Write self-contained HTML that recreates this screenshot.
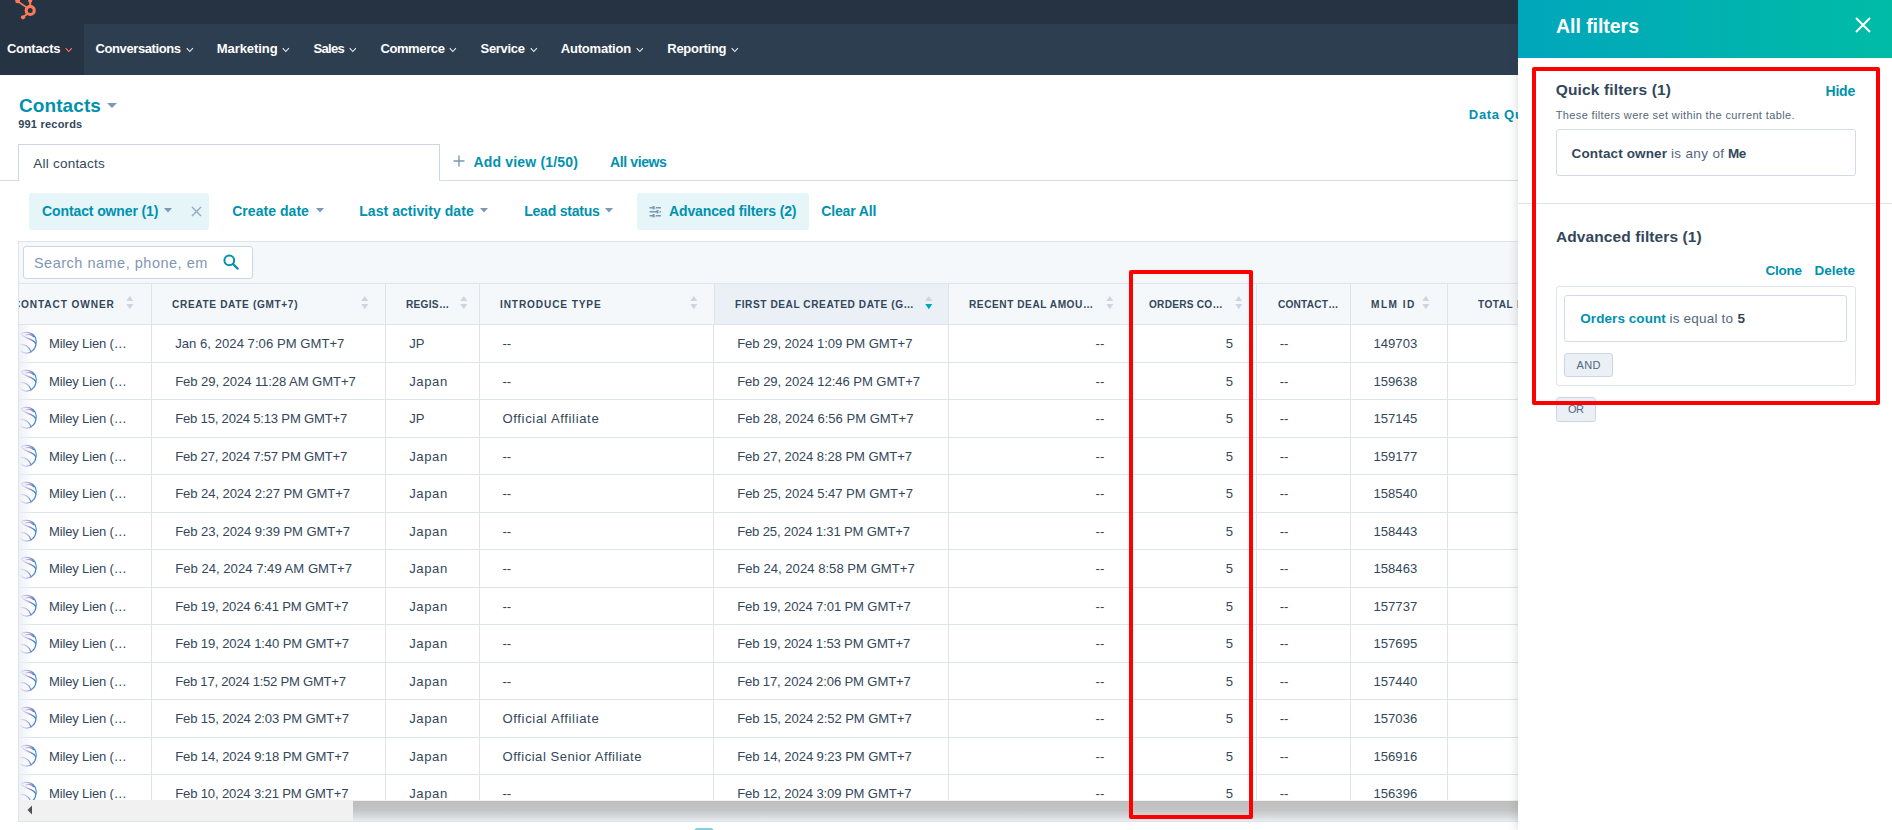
<!DOCTYPE html>
<html><head><meta charset="utf-8"><style>
html,body{margin:0;padding:0;width:1892px;height:830px;overflow:hidden;background:#fff;font-family:"Liberation Sans",sans-serif;}
.a{position:absolute;}
.t{position:absolute;white-space:nowrap;line-height:1;}
</style></head><body>
<div class="a" style="left:0px;top:0px;width:1892px;height:24px;background:#253342"></div>
<div class="a" style="left:0px;top:24px;width:1892px;height:51px;background:#2d3e50"></div>
<div class="a" style="left:0px;top:24px;width:84px;height:51px;background:#253342"></div>
<svg class="a" style="left:14px;top:0px" width="24" height="22" viewBox="0 0 24 22">
<g fill="none" stroke="#ff7a59" stroke-linecap="round">
<circle cx="16.2" cy="10.4" r="4.05" stroke-width="3.1"/>
<line x1="3.5" y1="1.2" x2="13" y2="7.6" stroke-width="1.7"/>
<line x1="16.2" y1="1" x2="16.2" y2="6.5" stroke-width="2"/>
<line x1="9" y1="17.4" x2="13.5" y2="13.5" stroke-width="1.9"/>
</g>
<g fill="#ff7a59"><circle cx="3.6" cy="0.9" r="2.4"/><circle cx="9" cy="17.3" r="2.1"/><rect x="14.1" y="-1" width="4.2" height="3.4" rx="1.8"/></g>
</svg>
<div class="t" style="left:7.00px;top:42.29px;font-size:13px;color:#ffffff;font-weight:bold;letter-spacing:-0.303px;">Contacts</div>
<svg class="a" style="left:65.0px;top:47px" width="8" height="6" viewBox="0 0 8 6"><path d="M0.7 1.1 L3.8 4.5 L6.9 1.1" fill="none" stroke="#ff7a59" stroke-width="1.05"/></svg>
<div class="t" style="left:95.50px;top:42.29px;font-size:13px;color:#ffffff;font-weight:bold;letter-spacing:-0.400px;">Conversations</div>
<svg class="a" style="left:185.5px;top:47px" width="8" height="6" viewBox="0 0 8 6"><path d="M0.7 1.1 L3.8 4.5 L6.9 1.1" fill="none" stroke="#eef2f6" stroke-width="1.05"/></svg>
<div class="t" style="left:216.70px;top:42.29px;font-size:13px;color:#ffffff;font-weight:bold;letter-spacing:-0.050px;">Marketing</div>
<svg class="a" style="left:282.2px;top:47px" width="8" height="6" viewBox="0 0 8 6"><path d="M0.7 1.1 L3.8 4.5 L6.9 1.1" fill="none" stroke="#eef2f6" stroke-width="1.05"/></svg>
<div class="t" style="left:313.40px;top:42.29px;font-size:13px;color:#ffffff;font-weight:bold;letter-spacing:-0.643px;">Sales</div>
<svg class="a" style="left:349.3px;top:47px" width="8" height="6" viewBox="0 0 8 6"><path d="M0.7 1.1 L3.8 4.5 L6.9 1.1" fill="none" stroke="#eef2f6" stroke-width="1.05"/></svg>
<div class="t" style="left:380.40px;top:42.29px;font-size:13px;color:#ffffff;font-weight:bold;letter-spacing:-0.385px;">Commerce</div>
<svg class="a" style="left:449.4px;top:47px" width="8" height="6" viewBox="0 0 8 6"><path d="M0.7 1.1 L3.8 4.5 L6.9 1.1" fill="none" stroke="#eef2f6" stroke-width="1.05"/></svg>
<div class="t" style="left:480.50px;top:42.29px;font-size:13px;color:#ffffff;font-weight:bold;letter-spacing:-0.294px;">Service</div>
<svg class="a" style="left:529.5px;top:47px" width="8" height="6" viewBox="0 0 8 6"><path d="M0.7 1.1 L3.8 4.5 L6.9 1.1" fill="none" stroke="#eef2f6" stroke-width="1.05"/></svg>
<div class="t" style="left:560.80px;top:42.29px;font-size:13px;color:#ffffff;font-weight:bold;letter-spacing:-0.212px;">Automation</div>
<svg class="a" style="left:635.6px;top:47px" width="8" height="6" viewBox="0 0 8 6"><path d="M0.7 1.1 L3.8 4.5 L6.9 1.1" fill="none" stroke="#eef2f6" stroke-width="1.05"/></svg>
<div class="t" style="left:667.30px;top:42.29px;font-size:13px;color:#ffffff;font-weight:bold;letter-spacing:-0.273px;">Reporting</div>
<svg class="a" style="left:731.0px;top:47px" width="8" height="6" viewBox="0 0 8 6"><path d="M0.7 1.1 L3.8 4.5 L6.9 1.1" fill="none" stroke="#eef2f6" stroke-width="1.05"/></svg>
<div class="t" style="left:18.90px;top:95.91px;font-size:19px;color:#0091ae;font-weight:bold;letter-spacing:0.102px;">Contacts</div>
<svg class="a" style="left:107px;top:103px" width="10" height="5" viewBox="0 0 10 5"><path d="M0 0 L10 0 L5 5Z" fill="#7c98b6"/></svg>
<div class="t" style="left:18.20px;top:119.29px;font-size:11px;color:#33475b;font-weight:bold;letter-spacing:0.224px;">991 records</div>
<div class="t" style="left:1468.80px;top:108.19px;font-size:13px;color:#0091ae;font-weight:bold;letter-spacing:0.7px;">Data Quality</div>
<div class="a" style="left:0px;top:180px;width:1518px;height:1px;background:#d6dde6"></div>
<div class="a" style="left:18px;top:144px;width:422px;height:37px;background:#fff;border:1px solid #cbd6e2;border-bottom:none;box-sizing:border-box"></div>
<div class="t" style="left:33.30px;top:156.77px;font-size:13.5px;color:#33475b;letter-spacing:0.225px;">All contacts</div>
<svg class="a" style="left:453px;top:155px" width="12" height="12" viewBox="0 0 12 12"><path d="M6 0.5V11.5M0.5 6H11.5" stroke="#7c98b6" stroke-width="1.4"/></svg>
<div class="t" style="left:473.50px;top:155.45px;font-size:14px;color:#0091ae;font-weight:bold;letter-spacing:0.177px;">Add view (1/50)</div>
<div class="t" style="left:610.00px;top:155.45px;font-size:14px;color:#0091ae;font-weight:bold;letter-spacing:-0.377px;">All views</div>
<div class="a" style="left:29px;top:193px;width:180px;height:37px;background:#e5f5f8;border-radius:3px"></div>
<div class="a" style="left:637px;top:193px;width:172px;height:37px;background:#e5f5f8;border-radius:3px"></div>
<div class="t" style="left:42.10px;top:204.45px;font-size:14px;color:#0091ae;font-weight:bold;letter-spacing:-0.120px;">Contact owner (1)</div>
<svg class="a" style="left:164px;top:208px" width="8" height="5" viewBox="0 0 8 5"><path d="M0 0H8L4 4.5Z" fill="#7c98b6"/></svg>
<svg class="a" style="left:191px;top:205.5px" width="11" height="11" viewBox="0 0 11 11"><path d="M1 1L10 10M10 1L1 10" stroke="#94a9bf" stroke-width="1.4"/></svg>
<div class="t" style="left:232.20px;top:204.45px;font-size:14px;color:#0091ae;font-weight:bold;letter-spacing:0.045px;">Create date</div>
<svg class="a" style="left:315.5px;top:208px" width="8" height="5" viewBox="0 0 8 5"><path d="M0 0H8L4 4.5Z" fill="#7c98b6"/></svg>
<div class="t" style="left:359.20px;top:204.45px;font-size:14px;color:#0091ae;font-weight:bold;letter-spacing:0.053px;">Last activity date</div>
<svg class="a" style="left:480px;top:208px" width="8" height="5" viewBox="0 0 8 5"><path d="M0 0H8L4 4.5Z" fill="#7c98b6"/></svg>
<div class="t" style="left:524.20px;top:204.45px;font-size:14px;color:#0091ae;font-weight:bold;letter-spacing:-0.220px;">Lead status</div>
<svg class="a" style="left:605px;top:208px" width="8" height="5" viewBox="0 0 8 5"><path d="M0 0H8L4 4.5Z" fill="#7c98b6"/></svg>
<svg class="a" style="left:649px;top:205px" width="13" height="13" viewBox="0 0 13 13"><g stroke="#7c98b6" stroke-width="1.6"><path d="M0.5 2.7H12M0.5 6.7H12M0.5 10.7H12"/></g><g fill="#7c98b6"><rect x="3.6" y="1" width="2" height="3.4"/><rect x="7.5" y="5" width="2" height="3.4"/><rect x="3.6" y="9" width="2" height="3.4"/></g><g fill="#e5f5f8"><rect x="5.6" y="2" width="1.2" height="1.4"/><rect x="9.5" y="6" width="1.2" height="1.4"/><rect x="5.6" y="10" width="1.2" height="1.4"/></g></svg>
<div class="t" style="left:669.00px;top:204.45px;font-size:14px;color:#0091ae;font-weight:bold;letter-spacing:-0.128px;">Advanced filters (2)</div>
<div class="t" style="left:821.20px;top:204.45px;font-size:14px;color:#0091ae;font-weight:bold;letter-spacing:-0.148px;">Clear All</div>
<div class="a" style="left:18px;top:241px;width:1500px;height:581px;background:#fff;border:1px solid #dfe3eb;border-right:none;box-sizing:border-box"></div>
<div class="a" style="left:19px;top:242px;width:1499px;height:41px;background:#f5f8fa"></div>
<div class="a" style="left:23px;top:246px;width:230px;height:33px;background:#fff;border:1px solid #cbd6e2;border-radius:3px;box-sizing:border-box"></div>
<div class="t" style="left:33.90px;top:255.72px;font-size:14.5px;color:#7f97b2;letter-spacing:0.504px;">Search name, phone, em</div>
<svg class="a" style="left:223px;top:254px" width="16" height="16" viewBox="0 0 16 16"><circle cx="6.3" cy="6.3" r="4.9" fill="none" stroke="#0091ae" stroke-width="2"/><path d="M10 10L14.6 14.6" stroke="#0091ae" stroke-width="2.2" stroke-linecap="round"/></svg>
<div class="a" style="left:19px;top:283px;width:1499px;height:1px;background:#dfe3eb"></div>
<div class="a" style="left:19px;top:284px;width:1499px;height:40px;background:#f5f8fa"></div>
<div class="a" style="left:714px;top:284px;width:234px;height:40px;background:#eaf0f6"></div>
<div class="a" style="left:19px;top:324px;width:1499px;height:1px;background:#dfe3eb"></div>
<div class="a" style="left:151px;top:284px;width:1px;height:516px;background:#dfe3eb"></div>
<div class="a" style="left:385px;top:284px;width:1px;height:516px;background:#dfe3eb"></div>
<div class="a" style="left:479px;top:284px;width:1px;height:516px;background:#dfe3eb"></div>
<div class="a" style="left:714px;top:284px;width:1px;height:40px;background:#dfe3eb"></div>
<div class="a" style="left:713px;top:325px;width:1px;height:475px;background:#dfe3eb"></div>
<div class="a" style="left:948px;top:284px;width:1px;height:516px;background:#dfe3eb"></div>
<div class="a" style="left:1130px;top:284px;width:1px;height:516px;background:#dfe3eb"></div>
<div class="a" style="left:1256px;top:284px;width:1px;height:516px;background:#dfe3eb"></div>
<div class="a" style="left:1350px;top:284px;width:1px;height:516px;background:#dfe3eb"></div>
<div class="a" style="left:1447px;top:284px;width:1px;height:516px;background:#dfe3eb"></div>
<div class="a" style="left:19px;top:284px;width:132px;height:40px;overflow:hidden">
<div class="t" style="left:1.60px;top:14.56px;font-size:11.5px;color:#33475b;font-weight:bold;letter-spacing:1.022px;transform:scaleX(0.88);transform-origin:0 0;">ONTACT OWNER</div>
<div class="t" style="left:-6.31px;top:14.56px;font-size:11.5px;color:#33475b;font-weight:bold;transform:scaleX(0.88);transform-origin:0 0;">C</div>
</div>
<div class="t" style="left:172.00px;top:298.56px;font-size:11.5px;color:#33475b;font-weight:bold;letter-spacing:0.724px;transform:scaleX(0.88);transform-origin:0 0;">CREATE DATE (GMT+7)</div>
<div class="t" style="left:406.40px;top:298.56px;font-size:11.5px;color:#33475b;font-weight:bold;letter-spacing:0.316px;transform:scaleX(0.88);transform-origin:0 0;">REGIS…</div>
<div class="t" style="left:500.40px;top:298.56px;font-size:11.5px;color:#33475b;font-weight:bold;letter-spacing:0.988px;transform:scaleX(0.88);transform-origin:0 0;">INTRODUCE TYPE</div>
<div class="t" style="left:734.50px;top:298.56px;font-size:11.5px;color:#33475b;font-weight:bold;letter-spacing:0.635px;transform:scaleX(0.88);transform-origin:0 0;">FIRST DEAL CREATED DATE (G…</div>
<div class="t" style="left:969.10px;top:298.56px;font-size:11.5px;color:#33475b;font-weight:bold;letter-spacing:0.621px;transform:scaleX(0.88);transform-origin:0 0;">RECENT DEAL AMOU…</div>
<div class="t" style="left:1149.30px;top:298.56px;font-size:11.5px;color:#33475b;font-weight:bold;letter-spacing:0.277px;transform:scaleX(0.88);transform-origin:0 0;">ORDERS CO…</div>
<div class="t" style="left:1277.50px;top:298.56px;font-size:11.5px;color:#33475b;font-weight:bold;letter-spacing:0.237px;transform:scaleX(0.88);transform-origin:0 0;">CONTACT…</div>
<div class="t" style="left:1371.40px;top:298.56px;font-size:11.5px;color:#33475b;font-weight:bold;letter-spacing:1.665px;transform:scaleX(0.88);transform-origin:0 0;">MLM ID</div>
<div class="t" style="left:1477.50px;top:298.56px;font-size:11.5px;color:#33475b;font-weight:bold;letter-spacing:0.542px;transform:scaleX(0.88);transform-origin:0 0;">TOTAL</div>
<div class="t" style="left:1516.50px;top:298.56px;font-size:11.5px;color:#33475b;font-weight:bold;transform:scaleX(0.88);transform-origin:0 0;">R</div>
<svg class="a" style="left:126.2px;top:296px" width="8" height="14" viewBox="0 0 8 14"><path d="M0.3 5L3.8 0L7.3 5Z" fill="#cbd6e2"/><path d="M0.3 8L3.8 13.2L7.3 8Z" fill="#cbd6e2"/></svg>
<svg class="a" style="left:361.2px;top:296px" width="8" height="14" viewBox="0 0 8 14"><path d="M0.3 5L3.8 0L7.3 5Z" fill="#cbd6e2"/><path d="M0.3 8L3.8 13.2L7.3 8Z" fill="#cbd6e2"/></svg>
<svg class="a" style="left:459.7px;top:296px" width="8" height="14" viewBox="0 0 8 14"><path d="M0.3 5L3.8 0L7.3 5Z" fill="#cbd6e2"/><path d="M0.3 8L3.8 13.2L7.3 8Z" fill="#cbd6e2"/></svg>
<svg class="a" style="left:689.7px;top:296px" width="8" height="14" viewBox="0 0 8 14"><path d="M0.3 5L3.8 0L7.3 5Z" fill="#cbd6e2"/><path d="M0.3 8L3.8 13.2L7.3 8Z" fill="#cbd6e2"/></svg>
<svg class="a" style="left:1105.7px;top:296px" width="8" height="14" viewBox="0 0 8 14"><path d="M0.3 5L3.8 0L7.3 5Z" fill="#cbd6e2"/><path d="M0.3 8L3.8 13.2L7.3 8Z" fill="#cbd6e2"/></svg>
<svg class="a" style="left:1235.2px;top:296px" width="8" height="14" viewBox="0 0 8 14"><path d="M0.3 5L3.8 0L7.3 5Z" fill="#cbd6e2"/><path d="M0.3 8L3.8 13.2L7.3 8Z" fill="#cbd6e2"/></svg>
<svg class="a" style="left:1422.2px;top:296px" width="8" height="14" viewBox="0 0 8 14"><path d="M0.3 5L3.8 0L7.3 5Z" fill="#cbd6e2"/><path d="M0.3 8L3.8 13.2L7.3 8Z" fill="#cbd6e2"/></svg>
<svg class="a" style="left:924.7px;top:296px" width="8" height="14" viewBox="0 0 8 14"><path d="M0.3 5L3.8 0L7.3 5Z" fill="#cbd6e2"/><path d="M0.3 8L3.8 13.2L7.3 8Z" fill="#00a4bd"/></svg>
<div class="a" style="left:19px;top:325px;width:1499px;height:475px;overflow:hidden">
<div class="a" style="left:0px;top:36.8px;width:1499px;height:1px;background:#dfe3eb"></div>
<svg class="a" style="left:1px;top:6.1px" width="18" height="23" viewBox="0 0 18 23"><defs><linearGradient id="g0" x1="0" y1="0" x2="1" y2="0"><stop offset="0" stop-color="#c9b2e3"/><stop offset="0.6" stop-color="#8f77c6"/><stop offset="1" stop-color="#2f86cf"/></linearGradient></defs><g fill="none" stroke="url(#g0)" stroke-width="1.25" stroke-linecap="round"><path d="M1.2 2.6C4 1 9.5 0.5 13 3.5 C16.5 6.5 16.8 12 15 16.5 C13.5 20 9.5 22.5 5.5 22 C3.5 21.7 2 21 1 20"/><path d="M1.8 3.2C2.5 5.8 7 6.8 11 8.6 C13.5 9.8 15 11 15.6 12.5"/><path d="M5.5 4C8 3.2 11.5 3.6 13.6 5.6"/><path d="M0.5 13.5C4.5 13.2 9 15.5 11 20.8"/></g></svg>
<div class="t" style="left:30.00px;top:12.49px;font-size:13px;color:#33475b;letter-spacing:-0.147px;">Miley Lien (…</div>
<div class="t" style="left:156.20px;top:12.41px;font-size:13.1px;color:#33475b;letter-spacing:0.030px;">Jan 6, 2024 7:06 PM GMT+7</div>
<div class="t" style="left:390.20px;top:12.41px;font-size:13.1px;color:#33475b;">JP</div>
<div class="t" style="left:483.50px;top:12.41px;font-size:13.1px;color:#33475b;">--</div>
<div class="t" style="left:718.20px;top:12.41px;font-size:13.1px;color:#33475b;letter-spacing:-0.080px;">Feb 29, 2024 1:09 PM GMT+7</div>
<div class="t" style="left:1076.58px;top:12.41px;font-size:13.1px;color:#33475b;">--</div>
<div class="t" style="left:1206.81px;top:12.41px;font-size:13.1px;color:#33475b;">5</div>
<div class="t" style="left:1260.70px;top:12.41px;font-size:13.1px;color:#33475b;">--</div>
<div class="t" style="left:1354.50px;top:12.41px;font-size:13.1px;color:#33475b;">149703</div>
<div class="a" style="left:0px;top:74.3px;width:1499px;height:1px;background:#dfe3eb"></div>
<svg class="a" style="left:1px;top:43.6px" width="18" height="23" viewBox="0 0 18 23"><defs><linearGradient id="g1" x1="0" y1="0" x2="1" y2="0"><stop offset="0" stop-color="#c9b2e3"/><stop offset="0.6" stop-color="#8f77c6"/><stop offset="1" stop-color="#2f86cf"/></linearGradient></defs><g fill="none" stroke="url(#g1)" stroke-width="1.25" stroke-linecap="round"><path d="M1.2 2.6C4 1 9.5 0.5 13 3.5 C16.5 6.5 16.8 12 15 16.5 C13.5 20 9.5 22.5 5.5 22 C3.5 21.7 2 21 1 20"/><path d="M1.8 3.2C2.5 5.8 7 6.8 11 8.6 C13.5 9.8 15 11 15.6 12.5"/><path d="M5.5 4C8 3.2 11.5 3.6 13.6 5.6"/><path d="M0.5 13.5C4.5 13.2 9 15.5 11 20.8"/></g></svg>
<div class="t" style="left:30.00px;top:49.99px;font-size:13px;color:#33475b;letter-spacing:-0.147px;">Miley Lien (…</div>
<div class="t" style="left:156.20px;top:49.91px;font-size:13.1px;color:#33475b;letter-spacing:-0.085px;">Feb 29, 2024 11:28 AM GMT+7</div>
<div class="t" style="left:390.20px;top:49.91px;font-size:13.1px;color:#33475b;letter-spacing:0.577px;">Japan</div>
<div class="t" style="left:483.50px;top:49.91px;font-size:13.1px;color:#33475b;">--</div>
<div class="t" style="left:718.20px;top:49.91px;font-size:13.1px;color:#33475b;letter-spacing:-0.061px;">Feb 29, 2024 12:46 PM GMT+7</div>
<div class="t" style="left:1076.58px;top:49.91px;font-size:13.1px;color:#33475b;">--</div>
<div class="t" style="left:1206.81px;top:49.91px;font-size:13.1px;color:#33475b;">5</div>
<div class="t" style="left:1260.70px;top:49.91px;font-size:13.1px;color:#33475b;">--</div>
<div class="t" style="left:1354.50px;top:49.91px;font-size:13.1px;color:#33475b;">159638</div>
<div class="a" style="left:0px;top:111.8px;width:1499px;height:1px;background:#dfe3eb"></div>
<svg class="a" style="left:1px;top:81.1px" width="18" height="23" viewBox="0 0 18 23"><defs><linearGradient id="g2" x1="0" y1="0" x2="1" y2="0"><stop offset="0" stop-color="#c9b2e3"/><stop offset="0.6" stop-color="#8f77c6"/><stop offset="1" stop-color="#2f86cf"/></linearGradient></defs><g fill="none" stroke="url(#g2)" stroke-width="1.25" stroke-linecap="round"><path d="M1.2 2.6C4 1 9.5 0.5 13 3.5 C16.5 6.5 16.8 12 15 16.5 C13.5 20 9.5 22.5 5.5 22 C3.5 21.7 2 21 1 20"/><path d="M1.8 3.2C2.5 5.8 7 6.8 11 8.6 C13.5 9.8 15 11 15.6 12.5"/><path d="M5.5 4C8 3.2 11.5 3.6 13.6 5.6"/><path d="M0.5 13.5C4.5 13.2 9 15.5 11 20.8"/></g></svg>
<div class="t" style="left:30.00px;top:87.49px;font-size:13px;color:#33475b;letter-spacing:-0.147px;">Miley Lien (…</div>
<div class="t" style="left:156.20px;top:87.41px;font-size:13.1px;color:#33475b;letter-spacing:-0.208px;">Feb 15, 2024 5:13 PM GMT+7</div>
<div class="t" style="left:390.20px;top:87.41px;font-size:13.1px;color:#33475b;">JP</div>
<div class="t" style="left:483.50px;top:87.41px;font-size:13.1px;color:#33475b;letter-spacing:0.633px;">Official Affiliate</div>
<div class="t" style="left:718.20px;top:87.41px;font-size:13.1px;color:#33475b;letter-spacing:-0.036px;">Feb 28, 2024 6:56 PM GMT+7</div>
<div class="t" style="left:1076.58px;top:87.41px;font-size:13.1px;color:#33475b;">--</div>
<div class="t" style="left:1206.81px;top:87.41px;font-size:13.1px;color:#33475b;">5</div>
<div class="t" style="left:1260.70px;top:87.41px;font-size:13.1px;color:#33475b;">--</div>
<div class="t" style="left:1354.50px;top:87.41px;font-size:13.1px;color:#33475b;">157145</div>
<div class="a" style="left:0px;top:149.3px;width:1499px;height:1px;background:#dfe3eb"></div>
<svg class="a" style="left:1px;top:118.6px" width="18" height="23" viewBox="0 0 18 23"><defs><linearGradient id="g3" x1="0" y1="0" x2="1" y2="0"><stop offset="0" stop-color="#c9b2e3"/><stop offset="0.6" stop-color="#8f77c6"/><stop offset="1" stop-color="#2f86cf"/></linearGradient></defs><g fill="none" stroke="url(#g3)" stroke-width="1.25" stroke-linecap="round"><path d="M1.2 2.6C4 1 9.5 0.5 13 3.5 C16.5 6.5 16.8 12 15 16.5 C13.5 20 9.5 22.5 5.5 22 C3.5 21.7 2 21 1 20"/><path d="M1.8 3.2C2.5 5.8 7 6.8 11 8.6 C13.5 9.8 15 11 15.6 12.5"/><path d="M5.5 4C8 3.2 11.5 3.6 13.6 5.6"/><path d="M0.5 13.5C4.5 13.2 9 15.5 11 20.8"/></g></svg>
<div class="t" style="left:30.00px;top:124.99px;font-size:13px;color:#33475b;letter-spacing:-0.147px;">Miley Lien (…</div>
<div class="t" style="left:156.20px;top:124.91px;font-size:13.1px;color:#33475b;letter-spacing:-0.208px;">Feb 27, 2024 7:57 PM GMT+7</div>
<div class="t" style="left:390.20px;top:124.91px;font-size:13.1px;color:#33475b;letter-spacing:0.577px;">Japan</div>
<div class="t" style="left:483.50px;top:124.91px;font-size:13.1px;color:#33475b;">--</div>
<div class="t" style="left:718.20px;top:124.91px;font-size:13.1px;color:#33475b;letter-spacing:-0.092px;">Feb 27, 2024 8:28 PM GMT+7</div>
<div class="t" style="left:1076.58px;top:124.91px;font-size:13.1px;color:#33475b;">--</div>
<div class="t" style="left:1206.81px;top:124.91px;font-size:13.1px;color:#33475b;">5</div>
<div class="t" style="left:1260.70px;top:124.91px;font-size:13.1px;color:#33475b;">--</div>
<div class="t" style="left:1354.50px;top:124.91px;font-size:13.1px;color:#33475b;">159177</div>
<div class="a" style="left:0px;top:186.8px;width:1499px;height:1px;background:#dfe3eb"></div>
<svg class="a" style="left:1px;top:156.1px" width="18" height="23" viewBox="0 0 18 23"><defs><linearGradient id="g4" x1="0" y1="0" x2="1" y2="0"><stop offset="0" stop-color="#c9b2e3"/><stop offset="0.6" stop-color="#8f77c6"/><stop offset="1" stop-color="#2f86cf"/></linearGradient></defs><g fill="none" stroke="url(#g4)" stroke-width="1.25" stroke-linecap="round"><path d="M1.2 2.6C4 1 9.5 0.5 13 3.5 C16.5 6.5 16.8 12 15 16.5 C13.5 20 9.5 22.5 5.5 22 C3.5 21.7 2 21 1 20"/><path d="M1.8 3.2C2.5 5.8 7 6.8 11 8.6 C13.5 9.8 15 11 15.6 12.5"/><path d="M5.5 4C8 3.2 11.5 3.6 13.6 5.6"/><path d="M0.5 13.5C4.5 13.2 9 15.5 11 20.8"/></g></svg>
<div class="t" style="left:30.00px;top:162.49px;font-size:13px;color:#33475b;letter-spacing:-0.147px;">Miley Lien (…</div>
<div class="t" style="left:156.20px;top:162.41px;font-size:13.1px;color:#33475b;letter-spacing:-0.092px;">Feb 24, 2024 2:27 PM GMT+7</div>
<div class="t" style="left:390.20px;top:162.41px;font-size:13.1px;color:#33475b;letter-spacing:0.577px;">Japan</div>
<div class="t" style="left:483.50px;top:162.41px;font-size:13.1px;color:#33475b;">--</div>
<div class="t" style="left:718.20px;top:162.41px;font-size:13.1px;color:#33475b;letter-spacing:-0.060px;">Feb 25, 2024 5:47 PM GMT+7</div>
<div class="t" style="left:1076.58px;top:162.41px;font-size:13.1px;color:#33475b;">--</div>
<div class="t" style="left:1206.81px;top:162.41px;font-size:13.1px;color:#33475b;">5</div>
<div class="t" style="left:1260.70px;top:162.41px;font-size:13.1px;color:#33475b;">--</div>
<div class="t" style="left:1354.50px;top:162.41px;font-size:13.1px;color:#33475b;">158540</div>
<div class="a" style="left:0px;top:224.3px;width:1499px;height:1px;background:#dfe3eb"></div>
<svg class="a" style="left:1px;top:193.6px" width="18" height="23" viewBox="0 0 18 23"><defs><linearGradient id="g5" x1="0" y1="0" x2="1" y2="0"><stop offset="0" stop-color="#c9b2e3"/><stop offset="0.6" stop-color="#8f77c6"/><stop offset="1" stop-color="#2f86cf"/></linearGradient></defs><g fill="none" stroke="url(#g5)" stroke-width="1.25" stroke-linecap="round"><path d="M1.2 2.6C4 1 9.5 0.5 13 3.5 C16.5 6.5 16.8 12 15 16.5 C13.5 20 9.5 22.5 5.5 22 C3.5 21.7 2 21 1 20"/><path d="M1.8 3.2C2.5 5.8 7 6.8 11 8.6 C13.5 9.8 15 11 15.6 12.5"/><path d="M5.5 4C8 3.2 11.5 3.6 13.6 5.6"/><path d="M0.5 13.5C4.5 13.2 9 15.5 11 20.8"/></g></svg>
<div class="t" style="left:30.00px;top:199.99px;font-size:13px;color:#33475b;letter-spacing:-0.147px;">Miley Lien (…</div>
<div class="t" style="left:156.20px;top:199.91px;font-size:13.1px;color:#33475b;letter-spacing:-0.092px;">Feb 23, 2024 9:39 PM GMT+7</div>
<div class="t" style="left:390.20px;top:199.91px;font-size:13.1px;color:#33475b;letter-spacing:0.577px;">Japan</div>
<div class="t" style="left:483.50px;top:199.91px;font-size:13.1px;color:#33475b;">--</div>
<div class="t" style="left:718.20px;top:199.91px;font-size:13.1px;color:#33475b;letter-spacing:-0.172px;">Feb 25, 2024 1:31 PM GMT+7</div>
<div class="t" style="left:1076.58px;top:199.91px;font-size:13.1px;color:#33475b;">--</div>
<div class="t" style="left:1206.81px;top:199.91px;font-size:13.1px;color:#33475b;">5</div>
<div class="t" style="left:1260.70px;top:199.91px;font-size:13.1px;color:#33475b;">--</div>
<div class="t" style="left:1354.50px;top:199.91px;font-size:13.1px;color:#33475b;">158443</div>
<div class="a" style="left:0px;top:261.8px;width:1499px;height:1px;background:#dfe3eb"></div>
<svg class="a" style="left:1px;top:231.1px" width="18" height="23" viewBox="0 0 18 23"><defs><linearGradient id="g6" x1="0" y1="0" x2="1" y2="0"><stop offset="0" stop-color="#c9b2e3"/><stop offset="0.6" stop-color="#8f77c6"/><stop offset="1" stop-color="#2f86cf"/></linearGradient></defs><g fill="none" stroke="url(#g6)" stroke-width="1.25" stroke-linecap="round"><path d="M1.2 2.6C4 1 9.5 0.5 13 3.5 C16.5 6.5 16.8 12 15 16.5 C13.5 20 9.5 22.5 5.5 22 C3.5 21.7 2 21 1 20"/><path d="M1.8 3.2C2.5 5.8 7 6.8 11 8.6 C13.5 9.8 15 11 15.6 12.5"/><path d="M5.5 4C8 3.2 11.5 3.6 13.6 5.6"/><path d="M0.5 13.5C4.5 13.2 9 15.5 11 20.8"/></g></svg>
<div class="t" style="left:30.00px;top:237.49px;font-size:13px;color:#33475b;letter-spacing:-0.147px;">Miley Lien (…</div>
<div class="t" style="left:156.20px;top:237.41px;font-size:13.1px;color:#33475b;letter-spacing:0.012px;">Feb 24, 2024 7:49 AM GMT+7</div>
<div class="t" style="left:390.20px;top:237.41px;font-size:13.1px;color:#33475b;letter-spacing:0.577px;">Japan</div>
<div class="t" style="left:483.50px;top:237.41px;font-size:13.1px;color:#33475b;">--</div>
<div class="t" style="left:718.20px;top:237.41px;font-size:13.1px;color:#33475b;letter-spacing:0.012px;">Feb 24, 2024 8:58 PM GMT+7</div>
<div class="t" style="left:1076.58px;top:237.41px;font-size:13.1px;color:#33475b;">--</div>
<div class="t" style="left:1206.81px;top:237.41px;font-size:13.1px;color:#33475b;">5</div>
<div class="t" style="left:1260.70px;top:237.41px;font-size:13.1px;color:#33475b;">--</div>
<div class="t" style="left:1354.50px;top:237.41px;font-size:13.1px;color:#33475b;">158463</div>
<div class="a" style="left:0px;top:299.3px;width:1499px;height:1px;background:#dfe3eb"></div>
<svg class="a" style="left:1px;top:268.6px" width="18" height="23" viewBox="0 0 18 23"><defs><linearGradient id="g7" x1="0" y1="0" x2="1" y2="0"><stop offset="0" stop-color="#c9b2e3"/><stop offset="0.6" stop-color="#8f77c6"/><stop offset="1" stop-color="#2f86cf"/></linearGradient></defs><g fill="none" stroke="url(#g7)" stroke-width="1.25" stroke-linecap="round"><path d="M1.2 2.6C4 1 9.5 0.5 13 3.5 C16.5 6.5 16.8 12 15 16.5 C13.5 20 9.5 22.5 5.5 22 C3.5 21.7 2 21 1 20"/><path d="M1.8 3.2C2.5 5.8 7 6.8 11 8.6 C13.5 9.8 15 11 15.6 12.5"/><path d="M5.5 4C8 3.2 11.5 3.6 13.6 5.6"/><path d="M0.5 13.5C4.5 13.2 9 15.5 11 20.8"/></g></svg>
<div class="t" style="left:30.00px;top:274.99px;font-size:13px;color:#33475b;letter-spacing:-0.147px;">Miley Lien (…</div>
<div class="t" style="left:156.20px;top:274.91px;font-size:13.1px;color:#33475b;letter-spacing:-0.160px;">Feb 19, 2024 6:41 PM GMT+7</div>
<div class="t" style="left:390.20px;top:274.91px;font-size:13.1px;color:#33475b;letter-spacing:0.577px;">Japan</div>
<div class="t" style="left:483.50px;top:274.91px;font-size:13.1px;color:#33475b;">--</div>
<div class="t" style="left:718.20px;top:274.91px;font-size:13.1px;color:#33475b;letter-spacing:-0.144px;">Feb 19, 2024 7:01 PM GMT+7</div>
<div class="t" style="left:1076.58px;top:274.91px;font-size:13.1px;color:#33475b;">--</div>
<div class="t" style="left:1206.81px;top:274.91px;font-size:13.1px;color:#33475b;">5</div>
<div class="t" style="left:1260.70px;top:274.91px;font-size:13.1px;color:#33475b;">--</div>
<div class="t" style="left:1354.50px;top:274.91px;font-size:13.1px;color:#33475b;">157737</div>
<div class="a" style="left:0px;top:336.8px;width:1499px;height:1px;background:#dfe3eb"></div>
<svg class="a" style="left:1px;top:306.1px" width="18" height="23" viewBox="0 0 18 23"><defs><linearGradient id="g8" x1="0" y1="0" x2="1" y2="0"><stop offset="0" stop-color="#c9b2e3"/><stop offset="0.6" stop-color="#8f77c6"/><stop offset="1" stop-color="#2f86cf"/></linearGradient></defs><g fill="none" stroke="url(#g8)" stroke-width="1.25" stroke-linecap="round"><path d="M1.2 2.6C4 1 9.5 0.5 13 3.5 C16.5 6.5 16.8 12 15 16.5 C13.5 20 9.5 22.5 5.5 22 C3.5 21.7 2 21 1 20"/><path d="M1.8 3.2C2.5 5.8 7 6.8 11 8.6 C13.5 9.8 15 11 15.6 12.5"/><path d="M5.5 4C8 3.2 11.5 3.6 13.6 5.6"/><path d="M0.5 13.5C4.5 13.2 9 15.5 11 20.8"/></g></svg>
<div class="t" style="left:30.00px;top:312.49px;font-size:13px;color:#33475b;letter-spacing:-0.147px;">Miley Lien (…</div>
<div class="t" style="left:156.20px;top:312.41px;font-size:13.1px;color:#33475b;letter-spacing:-0.136px;">Feb 19, 2024 1:40 PM GMT+7</div>
<div class="t" style="left:390.20px;top:312.41px;font-size:13.1px;color:#33475b;letter-spacing:0.577px;">Japan</div>
<div class="t" style="left:483.50px;top:312.41px;font-size:13.1px;color:#33475b;">--</div>
<div class="t" style="left:718.20px;top:312.41px;font-size:13.1px;color:#33475b;letter-spacing:-0.168px;">Feb 19, 2024 1:53 PM GMT+7</div>
<div class="t" style="left:1076.58px;top:312.41px;font-size:13.1px;color:#33475b;">--</div>
<div class="t" style="left:1206.81px;top:312.41px;font-size:13.1px;color:#33475b;">5</div>
<div class="t" style="left:1260.70px;top:312.41px;font-size:13.1px;color:#33475b;">--</div>
<div class="t" style="left:1354.50px;top:312.41px;font-size:13.1px;color:#33475b;">157695</div>
<div class="a" style="left:0px;top:374.3px;width:1499px;height:1px;background:#dfe3eb"></div>
<svg class="a" style="left:1px;top:343.6px" width="18" height="23" viewBox="0 0 18 23"><defs><linearGradient id="g9" x1="0" y1="0" x2="1" y2="0"><stop offset="0" stop-color="#c9b2e3"/><stop offset="0.6" stop-color="#8f77c6"/><stop offset="1" stop-color="#2f86cf"/></linearGradient></defs><g fill="none" stroke="url(#g9)" stroke-width="1.25" stroke-linecap="round"><path d="M1.2 2.6C4 1 9.5 0.5 13 3.5 C16.5 6.5 16.8 12 15 16.5 C13.5 20 9.5 22.5 5.5 22 C3.5 21.7 2 21 1 20"/><path d="M1.8 3.2C2.5 5.8 7 6.8 11 8.6 C13.5 9.8 15 11 15.6 12.5"/><path d="M5.5 4C8 3.2 11.5 3.6 13.6 5.6"/><path d="M0.5 13.5C4.5 13.2 9 15.5 11 20.8"/></g></svg>
<div class="t" style="left:30.00px;top:349.99px;font-size:13px;color:#33475b;letter-spacing:-0.147px;">Miley Lien (…</div>
<div class="t" style="left:156.20px;top:349.91px;font-size:13.1px;color:#33475b;letter-spacing:-0.256px;">Feb 17, 2024 1:52 PM GMT+7</div>
<div class="t" style="left:390.20px;top:349.91px;font-size:13.1px;color:#33475b;letter-spacing:0.577px;">Japan</div>
<div class="t" style="left:483.50px;top:349.91px;font-size:13.1px;color:#33475b;">--</div>
<div class="t" style="left:718.20px;top:349.91px;font-size:13.1px;color:#33475b;letter-spacing:-0.144px;">Feb 17, 2024 2:06 PM GMT+7</div>
<div class="t" style="left:1076.58px;top:349.91px;font-size:13.1px;color:#33475b;">--</div>
<div class="t" style="left:1206.81px;top:349.91px;font-size:13.1px;color:#33475b;">5</div>
<div class="t" style="left:1260.70px;top:349.91px;font-size:13.1px;color:#33475b;">--</div>
<div class="t" style="left:1354.50px;top:349.91px;font-size:13.1px;color:#33475b;">157440</div>
<div class="a" style="left:0px;top:411.8px;width:1499px;height:1px;background:#dfe3eb"></div>
<svg class="a" style="left:1px;top:381.1px" width="18" height="23" viewBox="0 0 18 23"><defs><linearGradient id="g10" x1="0" y1="0" x2="1" y2="0"><stop offset="0" stop-color="#c9b2e3"/><stop offset="0.6" stop-color="#8f77c6"/><stop offset="1" stop-color="#2f86cf"/></linearGradient></defs><g fill="none" stroke="url(#g10)" stroke-width="1.25" stroke-linecap="round"><path d="M1.2 2.6C4 1 9.5 0.5 13 3.5 C16.5 6.5 16.8 12 15 16.5 C13.5 20 9.5 22.5 5.5 22 C3.5 21.7 2 21 1 20"/><path d="M1.8 3.2C2.5 5.8 7 6.8 11 8.6 C13.5 9.8 15 11 15.6 12.5"/><path d="M5.5 4C8 3.2 11.5 3.6 13.6 5.6"/><path d="M0.5 13.5C4.5 13.2 9 15.5 11 20.8"/></g></svg>
<div class="t" style="left:30.00px;top:387.49px;font-size:13px;color:#33475b;letter-spacing:-0.147px;">Miley Lien (…</div>
<div class="t" style="left:156.20px;top:387.41px;font-size:13.1px;color:#33475b;letter-spacing:-0.136px;">Feb 15, 2024 2:03 PM GMT+7</div>
<div class="t" style="left:390.20px;top:387.41px;font-size:13.1px;color:#33475b;letter-spacing:0.577px;">Japan</div>
<div class="t" style="left:483.50px;top:387.41px;font-size:13.1px;color:#33475b;letter-spacing:0.633px;">Official Affiliate</div>
<div class="t" style="left:718.20px;top:387.41px;font-size:13.1px;color:#33475b;letter-spacing:-0.108px;">Feb 15, 2024 2:52 PM GMT+7</div>
<div class="t" style="left:1076.58px;top:387.41px;font-size:13.1px;color:#33475b;">--</div>
<div class="t" style="left:1206.81px;top:387.41px;font-size:13.1px;color:#33475b;">5</div>
<div class="t" style="left:1260.70px;top:387.41px;font-size:13.1px;color:#33475b;">--</div>
<div class="t" style="left:1354.50px;top:387.41px;font-size:13.1px;color:#33475b;">157036</div>
<div class="a" style="left:0px;top:449.3px;width:1499px;height:1px;background:#dfe3eb"></div>
<svg class="a" style="left:1px;top:418.6px" width="18" height="23" viewBox="0 0 18 23"><defs><linearGradient id="g11" x1="0" y1="0" x2="1" y2="0"><stop offset="0" stop-color="#c9b2e3"/><stop offset="0.6" stop-color="#8f77c6"/><stop offset="1" stop-color="#2f86cf"/></linearGradient></defs><g fill="none" stroke="url(#g11)" stroke-width="1.25" stroke-linecap="round"><path d="M1.2 2.6C4 1 9.5 0.5 13 3.5 C16.5 6.5 16.8 12 15 16.5 C13.5 20 9.5 22.5 5.5 22 C3.5 21.7 2 21 1 20"/><path d="M1.8 3.2C2.5 5.8 7 6.8 11 8.6 C13.5 9.8 15 11 15.6 12.5"/><path d="M5.5 4C8 3.2 11.5 3.6 13.6 5.6"/><path d="M0.5 13.5C4.5 13.2 9 15.5 11 20.8"/></g></svg>
<div class="t" style="left:30.00px;top:424.99px;font-size:13px;color:#33475b;letter-spacing:-0.147px;">Miley Lien (…</div>
<div class="t" style="left:156.20px;top:424.91px;font-size:13.1px;color:#33475b;letter-spacing:-0.136px;">Feb 14, 2024 9:18 PM GMT+7</div>
<div class="t" style="left:390.20px;top:424.91px;font-size:13.1px;color:#33475b;letter-spacing:0.577px;">Japan</div>
<div class="t" style="left:483.50px;top:424.91px;font-size:13.1px;color:#33475b;letter-spacing:0.506px;">Official Senior Affiliate</div>
<div class="t" style="left:718.20px;top:424.91px;font-size:13.1px;color:#33475b;letter-spacing:-0.108px;">Feb 14, 2024 9:23 PM GMT+7</div>
<div class="t" style="left:1076.58px;top:424.91px;font-size:13.1px;color:#33475b;">--</div>
<div class="t" style="left:1206.81px;top:424.91px;font-size:13.1px;color:#33475b;">5</div>
<div class="t" style="left:1260.70px;top:424.91px;font-size:13.1px;color:#33475b;">--</div>
<div class="t" style="left:1354.50px;top:424.91px;font-size:13.1px;color:#33475b;">156916</div>
<div class="a" style="left:0px;top:486.8px;width:1499px;height:1px;background:#dfe3eb"></div>
<svg class="a" style="left:1px;top:456.1px" width="18" height="23" viewBox="0 0 18 23"><defs><linearGradient id="g12" x1="0" y1="0" x2="1" y2="0"><stop offset="0" stop-color="#c9b2e3"/><stop offset="0.6" stop-color="#8f77c6"/><stop offset="1" stop-color="#2f86cf"/></linearGradient></defs><g fill="none" stroke="url(#g12)" stroke-width="1.25" stroke-linecap="round"><path d="M1.2 2.6C4 1 9.5 0.5 13 3.5 C16.5 6.5 16.8 12 15 16.5 C13.5 20 9.5 22.5 5.5 22 C3.5 21.7 2 21 1 20"/><path d="M1.8 3.2C2.5 5.8 7 6.8 11 8.6 C13.5 9.8 15 11 15.6 12.5"/><path d="M5.5 4C8 3.2 11.5 3.6 13.6 5.6"/><path d="M0.5 13.5C4.5 13.2 9 15.5 11 20.8"/></g></svg>
<div class="t" style="left:30.00px;top:462.49px;font-size:13px;color:#33475b;letter-spacing:-0.147px;">Miley Lien (…</div>
<div class="t" style="left:156.20px;top:462.41px;font-size:13.1px;color:#33475b;letter-spacing:-0.160px;">Feb 10, 2024 3:21 PM GMT+7</div>
<div class="t" style="left:390.20px;top:462.41px;font-size:13.1px;color:#33475b;letter-spacing:0.577px;">Japan</div>
<div class="t" style="left:483.50px;top:462.41px;font-size:13.1px;color:#33475b;">--</div>
<div class="t" style="left:718.20px;top:462.41px;font-size:13.1px;color:#33475b;letter-spacing:-0.120px;">Feb 12, 2024 3:09 PM GMT+7</div>
<div class="t" style="left:1076.58px;top:462.41px;font-size:13.1px;color:#33475b;">--</div>
<div class="t" style="left:1206.81px;top:462.41px;font-size:13.1px;color:#33475b;">5</div>
<div class="t" style="left:1260.70px;top:462.41px;font-size:13.1px;color:#33475b;">--</div>
<div class="t" style="left:1354.50px;top:462.41px;font-size:13.1px;color:#33475b;">156396</div>
</div>
<div class="a" style="left:19px;top:325px;width:14px;height:475px;background:linear-gradient(90deg,rgba(234,240,246,0.9),rgba(255,255,255,0))"></div>
<div class="a" style="left:19px;top:800px;width:1499px;height:21px;background:#f1f1f1"></div>
<svg class="a" style="left:27px;top:805px" width="6" height="10" viewBox="0 0 6 10"><path d="M5 0.5V9.5L0.5 5Z" fill="#505050"/></svg>
<div class="a" style="left:353px;top:801px;width:1165px;height:19.5px;background:linear-gradient(#bebebe,#c4c4c4 45%,#dcdee2 85%,#e8edf3)"></div>
<div class="a" style="left:694px;top:828px;width:20px;height:4px;border:2px solid #7fd1de;border-bottom:none;border-radius:4px 4px 0 0;box-sizing:border-box"></div>
<div class="a" style="left:1518px;top:0px;width:374px;height:830px;background:#fff;box-shadow:-2px 0 8px rgba(45,62,80,0.15)"></div>
<div class="a" style="left:1518px;top:0px;width:374px;height:58px;background:linear-gradient(90deg,#00a6bb,#00bca6)"></div>
<div class="t" style="left:1556.00px;top:16.99px;font-size:19.5px;color:#ffffff;font-weight:bold;letter-spacing:-0.044px;">All filters</div>
<svg class="a" style="left:1855px;top:16.5px" width="16" height="16" viewBox="0 0 16 16"><path d="M1 1L15 15M15 1L1 15" stroke="#fff" stroke-width="2"/></svg>
<div class="t" style="left:1555.70px;top:81.88px;font-size:15.5px;color:#33475b;font-weight:bold;letter-spacing:0.154px;">Quick filters (1)</div>
<div class="t" style="left:1825.50px;top:84.15px;font-size:14px;color:#0091ae;font-weight:bold;letter-spacing:-0.213px;">Hide</div>
<div class="t" style="left:1555.70px;top:110.19px;font-size:11px;color:#54677b;letter-spacing:0.372px;">These filters were set within the current table.</div>
<div class="a" style="left:1556px;top:129px;width:300px;height:47px;background:#fff;border:1px solid #d3dce6;border-radius:3px;box-sizing:border-box"></div>
<div class="t" style="left:1571.60px;top:147.07px;font-size:13.5px;color:#33475b;font-weight:bold;letter-spacing:0.137px;">Contact owner</div>
<div class="t" style="left:1671.00px;top:147.07px;font-size:13.5px;color:#54677b;letter-spacing:0.338px;">is any of</div>
<div class="t" style="left:1728.00px;top:147.07px;font-size:13.5px;color:#33475b;font-weight:bold;letter-spacing:-0.454px;">Me</div>
<div class="a" style="left:1518px;top:203px;width:374px;height:1px;background:#dfe3eb"></div>
<div class="t" style="left:1555.90px;top:228.68px;font-size:15.5px;color:#33475b;font-weight:bold;letter-spacing:0.103px;">Advanced filters (1)</div>
<div class="t" style="left:1765.40px;top:264.27px;font-size:13.5px;color:#0091ae;font-weight:bold;letter-spacing:-0.225px;">Clone</div>
<div class="t" style="left:1814.50px;top:264.27px;font-size:13.5px;color:#0091ae;font-weight:bold;">Delete</div>
<div class="a" style="left:1556px;top:286px;width:300px;height:100px;background:#fff;border:1px solid #dfe3eb;border-radius:3px;box-sizing:border-box"></div>
<div class="a" style="left:1564px;top:295px;width:283px;height:47px;background:#fff;border:1px solid #d3dce6;border-radius:3px;box-sizing:border-box"></div>
<div class="t" style="left:1580.30px;top:311.77px;font-size:13.5px;color:#0091ae;font-weight:bold;letter-spacing:0.067px;">Orders count</div>
<div class="t" style="left:1669.50px;top:311.77px;font-size:13.5px;color:#54677b;letter-spacing:0.196px;">is equal to</div>
<div class="t" style="left:1737.50px;top:311.77px;font-size:13.5px;color:#33475b;font-weight:bold;">5</div>
<div class="a" style="left:1564px;top:353px;width:49px;height:24px;background:#eaf0f6;border:1px solid #cbd6e2;border-radius:3px;box-sizing:border-box"></div>
<div class="t" style="left:1576.50px;top:359.69px;font-size:11px;color:#54677b;letter-spacing:0.388px;">AND</div>
<div class="a" style="left:1556px;top:397px;width:40px;height:25px;background:#eaf0f6;border:1px solid #cbd6e2;border-radius:3px;box-sizing:border-box"></div>
<div class="t" style="left:1568.00px;top:404.19px;font-size:11px;color:#54677b;letter-spacing:-0.500px;">OR</div>
<div class="a" style="left:1532px;top:67px;width:348px;height:338px;border:4px solid #ff0000;border-radius:2px;box-sizing:border-box"></div>
<div class="a" style="left:1129px;top:270px;width:124px;height:549px;border:4px solid #ff0000;border-radius:2px;box-sizing:border-box"></div>
</body></html>
